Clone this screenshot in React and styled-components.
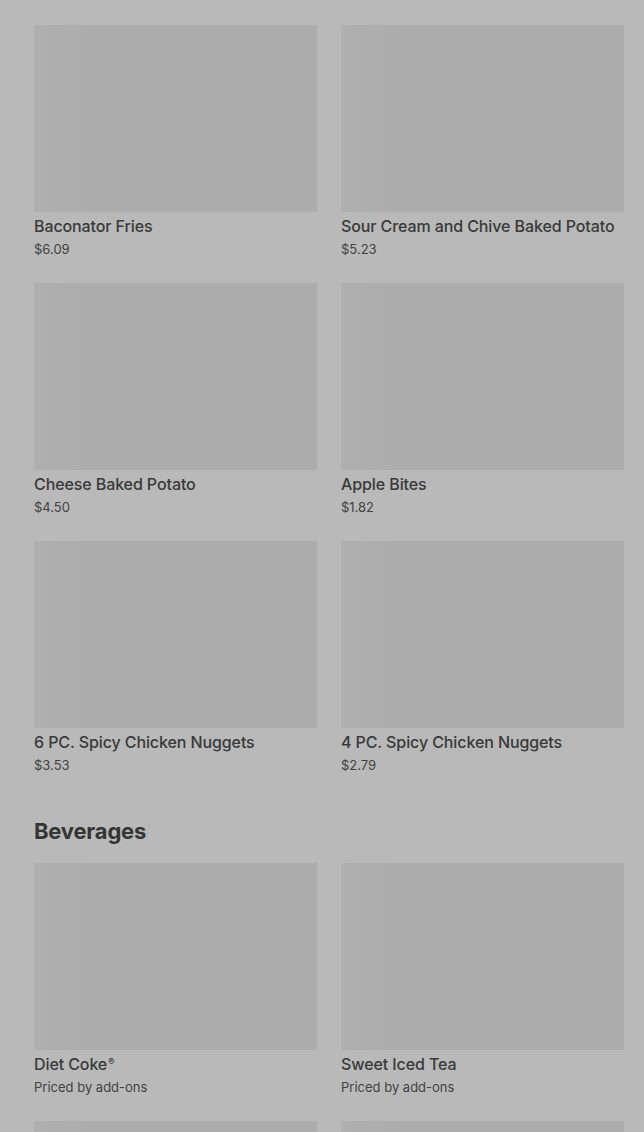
import React from "react"
import styled, {createGlobalStyle} from "styled-components";

const sides = [
    {name: "Medium French Fries", price: "$2.89"},
    {name: "Large French Fries", price: "$3.29"},
    {name: "Baconator Fries", price: "$6.09"},
    {name: "Sour Cream and Chive Baked Potato", price: "$5.23"},
    {name: "Cheese Baked Potato", price: "$4.50"},
    {name: "Apple Bites", price: "$1.82"},
    {name: "6 PC. Spicy Chicken Nuggets", price: "$3.53"},
    {name: "4 PC. Spicy Chicken Nuggets", price: "$2.79"},
]

const beverages = [
    {name: "Diet Coke", mark: true, price: "Priced by add-ons"},
    {name: "Sweet Iced Tea", price: "Priced by add-ons"},
    {name: "Coca-Cola", mark: true, price: "Priced by add-ons"},
    {name: "Sprite", mark: true, price: "Priced by add-ons"},
]

const App = () => {
    return <>
        <GlobalStyle/>
        <Page>
            <Section>
                <Grid>
                    {sides.map((item, i) => <Item key={i} item={item}/>)}
                </Grid>
            </Section>
            <Section>
                <Heading>Beverages</Heading>
                <Grid>
                    {beverages.map((item, i) => <Item key={i} item={item}/>)}
                </Grid>
            </Section>
        </Page>
        <Overlay/>
    </>
}

const Item = ({item}) => (
    <Card>
        <Thumb/>
        <Title>{item.name}{item.mark && <Mark>®</Mark>}</Title>
        <Price>{item.price}</Price>
    </Card>
)

export default App


const GlobalStyle = createGlobalStyle`
    html, body {
        margin: 0;
        padding: 0;
        background: #ffffff;
        overflow: hidden;
        height: 1132px;
    }
    body {
        font-family: Inter, Roboto, "Liberation Sans", sans-serif;
    }
`

const Page = styled.main`
    display: flex;
    flex-direction: column;
    gap: 43px;
    padding: 0 20px 0 34px;
    margin-top: -233px;
`

const Section = styled.section`
    display: flex;
    flex-direction: column;
`

const Heading = styled.h2`
    margin: 0 0 18px;
    font-size: 22px;
    line-height: 28px;
    font-weight: 700;
    letter-spacing: -0.2px;
    color: #4a4a4a;
`

const Grid = styled.div`
    display: grid;
    grid-template-columns: 1fr 1fr;
    column-gap: 24px;
    row-gap: 25px;
`

const Card = styled.div`
    display: flex;
    flex-direction: column;
    min-width: 0;
`

const Thumb = styled.div`
    height: 187px;
    background: linear-gradient(90deg, #f1f1f1 0%, #eeeeee 20%, #eeeeee 100%);
`

const Title = styled.div`
    margin-top: 4px;
    font-size: 16px;
    line-height: 20px;
    font-weight: 500;
    letter-spacing: -0.1px;
    color: #505050;
    white-space: nowrap;
`

const Mark = styled.span`
    font-size: 9px;
    line-height: 0;
    vertical-align: 5px;
    margin-left: 1px;
`

const Price = styled.div`
    margin-top: 4px;
    font-size: 13px;
    line-height: 18px;
    color: #5c5c5c;
`

const Overlay = styled.div`
    position: fixed;
    inset: 0;
    background: rgba(0, 0, 0, 0.275);
`
